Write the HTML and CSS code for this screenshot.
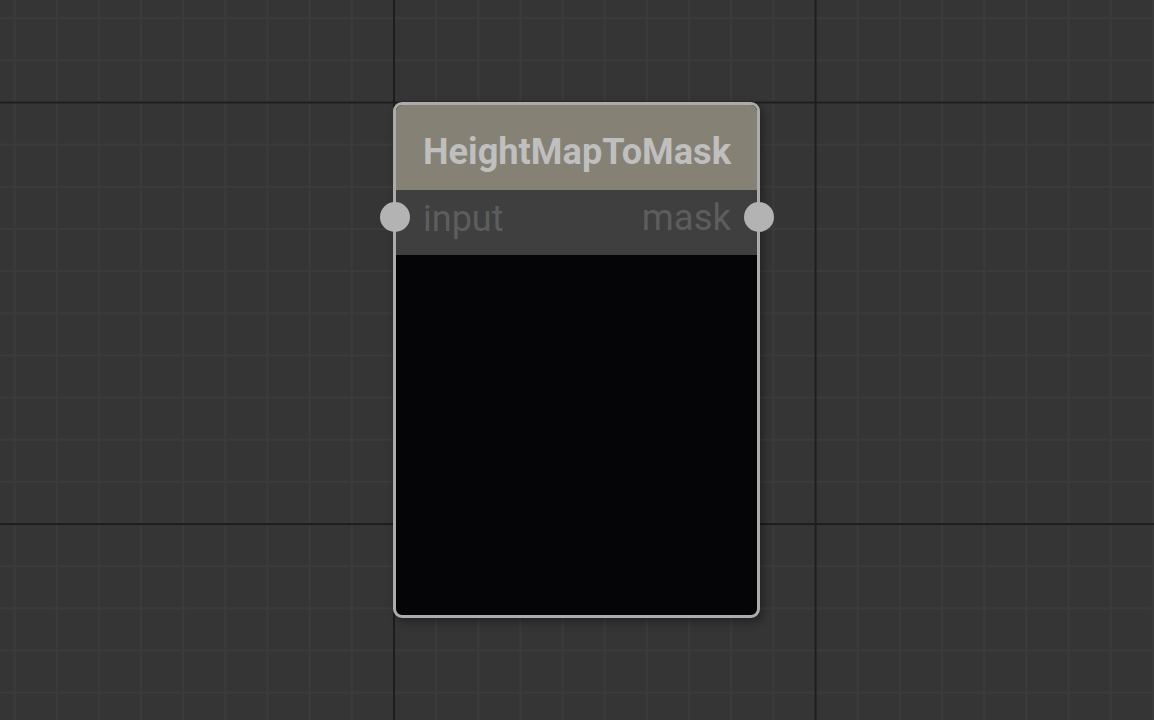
FILE: index.html
```html
<!DOCTYPE html>
<html>
<head>
<meta charset="utf-8">
<link rel="stylesheet" href="styles.css">
</head>
<body>
<div class="canvas">
  <div class="node">
    <div class="node-title">HeightMapToMask</div>
    <div class="node-ports">
      <span class="port-label">input</span>
      <span class="port-label">mask</span>
      <span class="port port-in"></span>
      <span class="port port-out"></span>
    </div>
    <div class="node-preview"></div>
  </div>
</div>
</body>
</html>
```

FILE: styles.css
```css
html, body {
  margin: 0;
  padding: 0;
  width: 100%;
  height: 100%;
  overflow: hidden;
}
body {
  font-family: Roboto, "Liberation Sans", sans-serif;
}
.canvas {
  position: relative;
  width: 1154px;
  height: 720px;
  background-color: #353535;
  background-image:
    linear-gradient(to right, #1d1d1d 2px, transparent 2px),
    linear-gradient(to bottom, #1d1d1d 2px, transparent 2px),
    linear-gradient(to right, #3b3b3b 2px, transparent 2px),
    linear-gradient(to bottom, #3b3b3b 2px, transparent 2px);
  background-size:
    421.6px 100%,
    100% 421.6px,
    42.16px 100%,
    100% 42.16px;
  background-position:
    393px 0,
    0 101.5px,
    13.6px 0,
    0 17.2px;
}
.node {
  position: absolute;
  left: 393px;
  top: 102px;
  width: 361px;
  height: 510px;
  border: 3px solid #acacac;
  border-radius: 9px;
  background: #050507;
  display: flex;
  flex-direction: column;
  box-shadow: 3px 4px 8px rgba(0, 0, 0, 0.35);
}
.node-title {
  height: 75px;
  flex: none;
  background: #858174;
  border-radius: 6px 6px 0 0;
  color: #bfbfbf;
  font-weight: 700;
  font-size: 36.2px;
  line-height: 1;
  display: flex;
  align-items: center;
  padding: 10px 0 0 27px;
}
.node-ports {
  position: relative;
  height: 57px;
  flex: none;
  background: #3f3f3f;
  display: flex;
  justify-content: space-between;
  align-items: center;
  padding: 0 26px 8px 27px;
}
.port-label {
  color: #5d5d5d;
  font-size: 36px;
  line-height: 1;
}
.port-label + .port-label {
  font-size: 36.5px;
}
.port {
  position: absolute;
  top: 12px;
  width: 30px;
  height: 30px;
  border-radius: 50%;
  background: #b3b3b3;
}
.port-in {
  left: -16.5px;
}
.port-out {
  right: -16.5px;
}
.node-preview {
  flex: 1;
  border-radius: 0 0 6px 6px;
}
```
